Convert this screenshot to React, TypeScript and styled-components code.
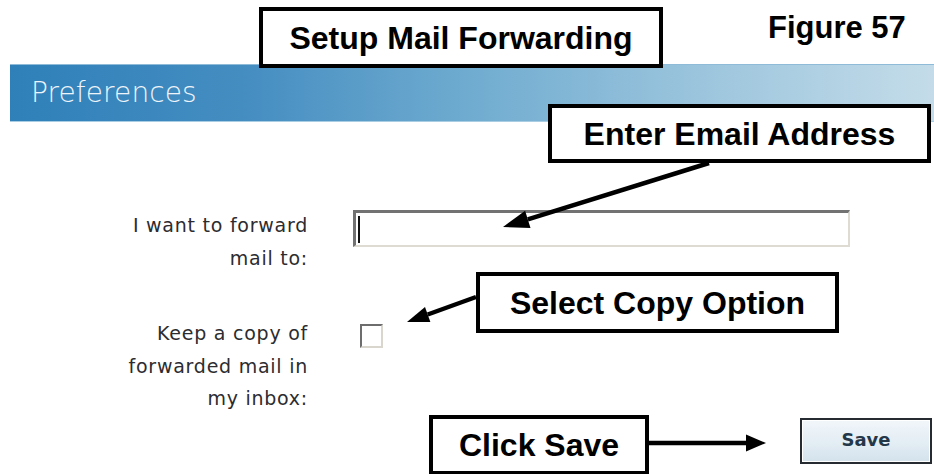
import React from "react";
import styled, { createGlobalStyle } from "styled-components";

const Global = createGlobalStyle`
  html, body { margin: 0; padding: 0; background: #ffffff; }
  body { font-family: "DejaVu Sans", Verdana, sans-serif; }
`;

const Canvas = styled.div`
  position: relative;
  width: 934px;
  height: 474px;
  overflow: hidden;
  background: #ffffff;
`;

const Page = styled.div`
  display: flex;
  flex-direction: column;
  padding-top: 64px;
`;

const TitleBar = styled.div`
  margin-left: 10px;
  height: 58px;
  box-sizing: border-box;
  display: flex;
  align-items: center;
  padding-left: 21px;
  padding-bottom: 2px;
  background: linear-gradient(90deg, #2f80b9 0%, #448dc1 25%, #70acd0 50%, #9cc5dd 75%, #c4dce9 100%);
  border-top: 1px solid #8fbbd8;
  border-bottom: 1px solid #a9cde2;
`;

const TitleText = styled.span`
  font-family: "DejaVu Sans", Verdana, sans-serif;
  font-weight: 200;
  font-size: 28px;
  color: #eef4fa;
  letter-spacing: 0.1px;
`;

const Form = styled.div`
  display: grid;
  grid-template-columns: 310px 1fr;
  column-gap: 43px;
  row-gap: 43px;
  padding-top: 87px;
  align-items: start;
`;

const Label = styled.div`
  box-sizing: border-box;
  padding-right: 2px;
  text-align: right;
  font-family: "DejaVu Sans", Verdana, sans-serif;
  font-size: 19px;
  line-height: 32.5px;
  color: #2c2c30;
  letter-spacing: 0.75px;
`;

const TextBox = styled.div`
  box-sizing: border-box;
  width: 497px;
  height: 37px;
  margin-top: 1px;
  display: flex;
  align-items: center;
  padding-left: 2px;
  background: #ffffff;
  border-top: 3px solid #727272;
  border-left: 3px solid #727272;
  border-right: 2px solid #dedbd2;
  border-bottom: 2px solid #dedbd2;
`;

const Caret = styled.span`
  display: block;
  width: 2px;
  height: 27px;
  background: #111;
`;

const CheckBox = styled.div`
  box-sizing: border-box;
  width: 23px;
  height: 24px;
  margin-left: 7px;
  margin-top: 7px;
  background: #ffffff;
  border-top: 2px solid #6d6d6d;
  border-left: 2px solid #6d6d6d;
  border-right: 2px solid #d9d6cd;
  border-bottom: 2px solid #d9d6cd;
`;

const Footer = styled.div`
  display: flex;
  justify-content: flex-end;
  padding-right: 2px;
  margin-top: 3px;
`;

const SaveButton = styled.button`
  box-sizing: border-box;
  width: 132px;
  height: 46px;
  border: 2px solid #262b31;
  box-shadow: inset 0 0 0 1px #ffffff;
  background: linear-gradient(180deg, #f1f6fa 0%, #e3edf4 55%, #d3e2ec 100%);
  font-family: "DejaVu Sans", Verdana, sans-serif;
  font-weight: bold;
  font-size: 18px;
  color: #243748;
  padding: 0;
  padding-bottom: 2px;
`;

const Callout = styled.div<{ $left: number; $top: number; $w: number; $h: number }>`
  position: absolute;
  left: ${(p) => p.$left}px;
  top: ${(p) => p.$top}px;
  width: ${(p) => p.$w}px;
  height: ${(p) => p.$h}px;
  box-sizing: border-box;
  border: 4px solid #000;
  background: #fff;
  display: flex;
  align-items: center;
  justify-content: center;
  font-family: "Liberation Sans", Arial, sans-serif;
  font-weight: bold;
  font-size: 32px;
  line-height: 32px;
  letter-spacing: 0px;
  color: #000;
  white-space: nowrap;
`;

const FigureLabel = styled.div`
  position: absolute;
  left: 768px;
  top: 12px;
  font-family: "Liberation Sans", Arial, sans-serif;
  font-weight: bold;
  font-size: 31px;
  line-height: 31px;
  color: #000;
  white-space: nowrap;
`;

const Arrows = styled.svg`
  position: absolute;
  left: 0;
  top: 0;
  width: 934px;
  height: 474px;
  pointer-events: none;
`;

export default function App() {
  return (
    <Canvas>
      <Global />
      <Page>
        <TitleBar>
          <TitleText>Preferences</TitleText>
        </TitleBar>
        <Form>
          <Label>
            I want to forward
            <br />
            mail to:
          </Label>
          <TextBox>
            <Caret />
          </TextBox>
          <Label>
            Keep a copy of
            <br />
            forwarded mail in
            <br />
            my inbox:
          </Label>
          <CheckBox />
        </Form>
        <Footer>
          <SaveButton>Save</SaveButton>
        </Footer>
      </Page>

      <Callout $left={259} $top={7} $w={404} $h={61}>Setup Mail Forwarding</Callout>
      <FigureLabel>Figure 57</FigureLabel>
      <Callout $left={548} $top={104} $w={383} $h={59}>Enter Email Address</Callout>
      <Callout $left={476} $top={272} $w={363} $h={61}>Select Copy Option</Callout>
      <Callout $left={429} $top={415} $w={220} $h={60}>Click Save</Callout>

      <Arrows viewBox="0 0 934 474">
        <line x1="709" y1="163" x2="527.8" y2="219.3" stroke="#000" strokeWidth="4.5" />
        <polygon points="503,227 530.5,227.9 525.1,210.7" fill="#000" />
        <line x1="476" y1="297" x2="427.7" y2="314.5" stroke="#000" strokeWidth="4.5" />
        <polygon points="407,322 430.4,322 425,307" fill="#000" />
        <line x1="649" y1="443" x2="747" y2="443" stroke="#000" strokeWidth="4.5" />
        <polygon points="766,443 746,434.5 746,451.5" fill="#000" />
      </Arrows>
    </Canvas>
  );
}
